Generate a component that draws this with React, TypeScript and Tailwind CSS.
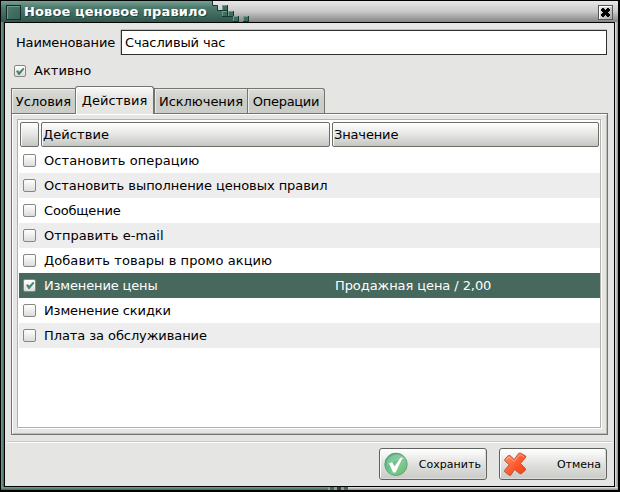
import React from "react";

const actions = [
  { name: "Остановить операцию", track: "tracking-[0.08px]" },
  { name: "Остановить выполнение ценовых правил", track: "tracking-[-0.05px]" },
  { name: "Сообщение", track: "tracking-[-0.18px]" },
  { name: "Отправить e-mail", track: "tracking-[0.07px]" },
  { name: "Добавить товары в промо акцию", track: "tracking-[0.08px]" },
  { name: "Изменение цены", track: "tracking-[-0.15px]", value: "Продажная цена / 2,00", on: true },
  { name: "Изменение скидки", track: "tracking-[-0.12px]" },
  { name: "Плата за обслуживание", track: "tracking-[-0.08px]" },
];

function Check({ on = false, size = "size-[13px]" }: { on?: boolean; size?: string }) {
  return (
    <span className={`${size} flex shrink-0 items-center justify-center rounded-[2px] border border-[#858782] bg-linear-to-b from-white to-[#dcdcda]`}>
      {on && (
        <svg width="10" height="9" viewBox="0 0 10 9" className="shrink-0">
          <path d="M1 4 L3 3.2 L4.2 4.8 L8.2 0.8 L9.4 2 L4.5 8 L3.4 8 Z" fill="#4a8270" />
        </svg>
      )}
    </span>
  );
}

function Block({ x, y }: { x: number; y: number }) {
  return (
    <g transform={`translate(${x} ${y})`}>
      <rect width="6" height="6" fill="#18382f" />
      <rect width="5" height="5" fill="#6d9c8d" />
      <rect x="1" y="1" width="4" height="4" fill="#3e6c5f" />
    </g>
  );
}

function Tab({ label, w, active = false, last = false, track }: { label: string; w: string; active?: boolean; last?: boolean; track: string }) {
  return active ? (
    <div className={`${w} ${track} relative z-10 -mb-px flex h-7 items-center justify-center self-end rounded-t-[3px] border border-b-0 border-[#73756f] bg-linear-to-b from-[#fbfbfb] to-[#e5e5e3] to-40% pb-px shadow-[inset_1px_1px_0_#fff]`}>{label}</div>
  ) : (
    <div className={`${w} ${track} flex h-[25px] items-center justify-center self-end border border-b-0 ${last ? "rounded-tr-[3px]" : "border-r-0"} border-[#73756f] bg-linear-to-b from-[#dcddda] to-[#cbcdc8] to-50% shadow-[inset_1px_1px_0_#ecedea]`}>{label}</div>
  );
}

const headCell = "h-[25px] shrink-0 flex items-center rounded-[2px] border border-[#6b6d68] bg-linear-to-b from-white via-[#e8e8e6] via-45% to-[#c5c7c2] shadow-[inset_1px_0_0_#fafafa] pl-px";
const button = "flex h-8 w-[108px] items-center justify-between rounded-[3px] border border-[#60625d] bg-linear-to-b from-white via-[#dedfdc] via-55% to-[#c9cbc6] pl-1 pr-[5px] text-[11px] shadow-[inset_1px_1px_0_#fff,inset_-1px_-1px_0_#dddedb]";

export default function App() {
  return (
    <div className="flex h-[492px] w-[620px] flex-col overflow-hidden bg-black pb-[2px] pl-px pr-[2px] pt-px font-['DejaVu_Sans',sans-serif] text-[13px] leading-none text-black">
      <div className="flex h-[21px] shrink-0 bg-linear-to-b from-[#e8e8e8] via-[#c9c9c9] via-50% to-[#858585]">
        <div className="flex w-[211px] items-center bg-linear-to-b from-[#76a294] via-[#4e7b6e] via-30% to-[#32574c] pl-[5px]">
          <span className="mt-px size-[15px] shrink-0 border border-[#142c25] bg-linear-to-br from-[#4c7c6e] to-[#386155] shadow-[inset_1px_1px_0_#6d9b8d]" />
          <span className="ml-[3px] whitespace-nowrap text-[13px] font-bold tracking-[0.13px] text-white [text-shadow:1px_1px_0_#23443a]">Новое ценовое правило</span>
        </div>
        <svg width="38" height="21" viewBox="0 0 38 21" className="shrink-0">
          <defs>
            <linearGradient id="bar" x1="0" y1="0" x2="0" y2="21" gradientUnits="userSpaceOnUse">
              <stop offset="0" stopColor="#76a294" /><stop offset=".3" stopColor="#4e7b6e" /><stop offset="1" stopColor="#32574c" />
            </linearGradient>
          </defs>
          <path d="M0 0 V21 H23 V15 H17 V11 H11 V9 H5 V5 H1 V0 Z" fill="#000" opacity=".14" />
          <path d="M0 0 V21 H21 V16 H16 V10 H11 V9 H5 V4 H1 V0 Z" fill="url(#bar)" />
          <path d="M0.5 0 V4.5 H5.5 V9.5 H11" fill="none" stroke="#18382f" />
          <Block x={10} y={4} />
          <Block x={10} y={10} />
          <Block x={16} y={10} />
          <Block x={21} y={15} />
          <Block x={31} y={15} />
        </svg>
        <div className="flex flex-1 items-center justify-end pr-[5px]">
          <span className="mt-px flex size-[15px] items-center justify-center border border-[#555] bg-linear-to-br from-[#eee] to-[#aaa] shadow-[inset_1px_1px_0_#fff]">
            <svg width="9" height="9" viewBox="0 0 9 9"><path d="M0 1H1V0H3V1H4V2H5V1H6V0H8V1H9V3H8V4H7V5H8V6H9V8H8V9H6V8H5V7H4V8H3V9H1V8H0V6H1V5H2V4H1V3H0Z" /></svg>
          </span>
        </div>
      </div>

      <div className="flex h-[465px] shrink-0">
        <div className="w-[3px] bg-linear-to-r from-[#76a294] to-[#3e6b5e]" />
        <div className="flex w-[611px] flex-col border border-black bg-[#e5e5e3]">
          <div className="ml-[11px] mt-[7px] flex h-[25px] items-center">
            <label className="w-[105px] shrink-0 tracking-[-0.17px]">Наименование</label>
            <div className="flex h-[25px] w-[486px] items-center border border-[#2e302f] bg-white pl-[3px] tracking-[-0.12px] shadow-[0_-1px_0_#bfc1bd,-1px_0_0_#bfc1bd]">Счасливый час</div>
          </div>
          <div className="ml-[9px] mt-[9px] flex h-[14px] items-center">
            <Check on size="size-3" />
            <span className="ml-2 pb-[2px] tracking-[0.05px]">Активно</span>
          </div>

          <div className="ml-[6px] mt-2 flex h-[27px] shrink-0">
            <Tab label="Условия" w="w-[64px]" track="tracking-[0px]" />
            <Tab label="Действия" w="w-[79px]" track="tracking-[0.05px]" active />
            <Tab label="Исключения" w="w-[93px]" track="tracking-[-0.05px]" />
            <Tab label="Операции" w="w-[78px]" track="tracking-[-0.3px]" last />
          </div>
          <div className="ml-[6px] h-[322px] w-[597px] shrink-0 border border-[#73756f] p-[5px] pr-[6px] shadow-[inset_1px_1px_0_#fff,inset_-1px_-1px_0_#babcb7]">
            <div className="h-[309px] border border-[#b0b2ae] bg-white pl-px pt-[2px] shadow-[1px_1px_0_#fff]">
              <div className="flex gap-[2px] pl-px">
                <div className={`${headCell} w-[19px]`} />
                <div className={`${headCell} w-[289px] tracking-[0.08px]`}>Действие</div>
                <div className={`${headCell} w-[267px] tracking-[-0.15px]`}>Значение</div>
              </div>
              <div className="mt-px">
                {actions.map((a, i) => (
                  <div key={a.name} className={`flex h-[25px] items-center pl-1 ${a.on ? "bg-[#47685c] text-white" : i % 2 ? "bg-[#ededed]" : "bg-white"}`}>
                    <Check on={a.on} />
                    <span className={`ml-2 w-[291px] shrink-0 whitespace-nowrap ${a.track}`}>{a.name}</span>
                    <span className="whitespace-nowrap tracking-[-0.08px]">{a.value}</span>
                  </div>
                ))}
              </div>
            </div>
          </div>

          <div className="mx-[2px] mt-[6px] h-[2px] shrink-0 border-b border-t border-b-white border-t-[#c6c8c4]" />
          <div className="mt-[5px] flex justify-end gap-3 pr-[7px]">
            <div className={button}>
              <svg width="25" height="25" viewBox="0 0 25 25">
                <defs>
                  <linearGradient id="ok" x1="0" y1="0" x2="1" y2="1">
                    <stop offset="0" stopColor="#46a878" /><stop offset=".6" stopColor="#80c992" /><stop offset="1" stopColor="#6bb66c" />
                  </linearGradient>
                </defs>
                <circle cx="12" cy="12.3" r="11.2" fill="url(#ok)" stroke="#4c9a72" strokeWidth=".8" />
                <path d="M3 9 Q6 3 12.5 2.5 Q18 3 21 7 Q12 7 3 14Z" fill="#fff" opacity=".2" />
                <path d="M5 11.5 L8.2 10.3 L10.6 14.6 L16.3 6 L18.8 5.6 L11.5 20.5 L9.2 20.5 Z" fill="#fff" />
              </svg>
              <span className="tracking-[0.05px]">Сохранить</span>
            </div>
            <div className={button}>
              <svg width="25" height="25" viewBox="0 0 25 25">
                <defs>
                  <linearGradient id="no" x1="0" y1="0" x2="1" y2="1">
                    <stop offset="0" stopColor="#ff9a78" /><stop offset=".5" stopColor="#ff5c30" /><stop offset="1" stopColor="#f63c0b" />
                  </linearGradient>
                </defs>
                <path d="M0.7 7.5 L4.3 3.5 L6 3.6 L10.2 7.5 L14.8 1.3 L16.3 1 L21.7 4 L21.8 5.3 L16.5 11.5 L21.5 16.7 L21.3 18.3 L17.3 21.8 L15.8 21.7 L10.5 17.5 L6.8 23.2 L5.4 23.4 L0.7 19.8 L0.6 18.3 L5.2 12.8 L0.8 8.8 Z" fill="url(#no)" stroke="#b94e39" strokeWidth=".9" strokeLinejoin="round" />
                <path d="M2.2 7.8 L5 5 L10.3 9.3 L15.7 2.4 L20 4.8" fill="none" stroke="#fff" opacity=".35" />
              </svg>
              <span className="tracking-[0px]">Отмена</span>
            </div>
          </div>
        </div>
        <div className="w-[3px] bg-linear-to-r from-[#e8e8e8] to-[#8a8a8a]" />
      </div>
      <div className="flex h-[3px] shrink-0">
        <div className="w-[327px] bg-linear-to-b from-[#76a294] to-[#3e6b5e]" />
        <div className="flex w-5 gap-[3px] bg-[#999] pl-[2px]">
          <span className="w-1 bg-[#3e6b5e]" /><span className="w-1 bg-[#25473d]" /><span className="w-1 bg-[#3e6b5e]" />
        </div>
        <div className="flex-1 bg-linear-to-b from-[#e8e8e8] to-[#8a8a8a]" />
      </div>
    </div>
  );
}
